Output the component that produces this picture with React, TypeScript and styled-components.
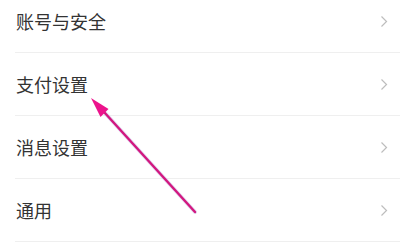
import React from 'react';
import styled, { createGlobalStyle } from 'styled-components';

const GlobalStyle = createGlobalStyle`
    html, body {
        margin: 0;
        padding: 0;
        background: #ffffff;
    }
`;

const Screen = styled.div`
    position: relative;
    width: 400px;
    height: 248px;
    overflow: hidden;
    background: #ffffff;
    font-family: 'Noto Sans CJK SC', 'Noto Sans', sans-serif;
`;

const List = styled.ul`
    list-style: none;
    margin: -10px 0 0 0;
    padding: 0;
`;

const Row = styled.li`
    display: flex;
    align-items: center;
    justify-content: space-between;
    box-sizing: border-box;
    height: 63px;
    margin-left: 15px;
    padding: 0 12px 0 1px;
    border-bottom: 1px solid #efefef;
`;

const Label = styled.span`
    font-size: 18px;
    color: #333333;
    letter-spacing: 0;
`;

const Chevron = styled.svg`
    width: 8px;
    height: 13px;
    flex-shrink: 0;
`;

const ArrowLayer = styled.svg`
    position: absolute;
    left: 0;
    top: 0;
    width: 400px;
    height: 248px;
    pointer-events: none;
`;

const items = ['账号与安全', '支付设置', '消息设置', '通用'];

const ChevronIcon = () => (
    <Chevron viewBox="0 0 8 13">
        <path d="M1.5 1.5 L6.5 6.5 L1.5 11.5" fill="none" stroke="#bdbdbd" strokeWidth="1.2" />
    </Chevron>
);

export default function App() {
    return (
        <Screen>
            <GlobalStyle />
            <List>
                {items.map((item) => (
                    <Row key={item}>
                        <Label>{item}</Label>
                        <ChevronIcon />
                    </Row>
                ))}
            </List>
            {/* pink annotation arrow */}
            <ArrowLayer viewBox="0 0 400 248">
                <line x1="195" y1="212" x2="105" y2="113" stroke="#c9b8e8" strokeWidth="4" strokeLinecap="round" opacity="0.5" />
                <line x1="195" y1="212" x2="104" y2="112" stroke="#d2177f" strokeWidth="2.4" strokeLinecap="round" />
                <polygon points="91,98 108.5,109 100.5,117" fill="#ec138c" />
            </ArrowLayer>
        </Screen>
    );
}
